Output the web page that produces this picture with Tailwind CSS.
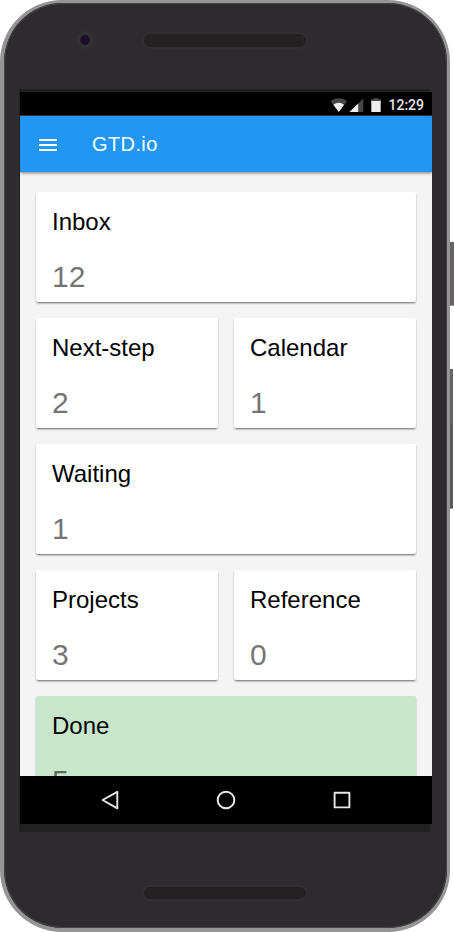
<!DOCTYPE html>
<html lang="en">
<head>
    <meta charset="UTF-8">
    <meta name="viewport" content="width=device-width, initial-scale=1.0">
    <title>GTD.io</title>
    <script src="https://cdn.jsdelivr.net/npm/@tailwindcss/browser@4"></script>
</head>
<body class="bg-white flex overflow-hidden font-['Liberation_Sans',sans-serif]">
    <!-- Phone body -->
    <div class="w-[450px] h-[932px] shrink-0 rounded-[62px] border-[3px] border-b-4 border-l-4 border-[#959595] bg-[#2d2b2d]">
        <div class="h-full rounded-[59px] border border-[#444644] flex flex-col">
            <!-- Camera and speaker -->
            <div class="h-[85px] shrink-0 flex items-start pt-[27px] pl-[71px]">
                <div class="size-[18px] rounded-full border-4 border-[#333233] bg-[#1a1128]"></div>
                <div class="w-[166px] h-[17px] mt-px ml-[48px] rounded-full border-2 border-[#312f31] bg-[#232122]"></div>
            </div>

            <!-- Screen -->
            <div class="ml-[14px] w-[411px] h-[743px] shrink-0 bg-[#222122] pl-px pt-[3px]">
                <div class="w-[412px] h-[732px] flex flex-col overflow-hidden bg-[#f4f4f4]">
                    <div class="h-6 shrink-0 bg-black border-b border-[#3a3430] flex items-center justify-end pt-[2px] pr-2">
                        <svg class="w-[34px] h-[16px] mr-[7px]" viewBox="0 0 34 16">
                            <path d="M0.5 4.2C5 .1 12.5.1 17 4.2L8.8 15z" fill="#464646"/>
                            <path d="M3.4 7.8c3-2.7 7.6-2.7 10.6 0L8.8 15z" fill="#eee"/>
                            <path d="M33.3 1.5V15H19.5z" fill="#464646"/>
                            <path d="M28.2 6.5V15H19.5z" fill="#eee"/>
                        </svg>
                        <svg class="w-[10px] h-[16px] mr-[7px]" viewBox="0 0 10 16">
                            <path d="M2.5 1h5v1H10v3H0V2h2.5z" fill="#464646"/>
                            <path d="M0.3 4h9.4v11H0.3z" fill="#eee"/>
                        </svg>
                        <span class="font-['Roboto',sans-serif] font-medium text-[14px] leading-none text-[#e6e6e6]">12:29</span>
                    </div>

                    <header class="relative h-14 shrink-0 bg-[#2196f3] shadow-[0_1px_3px_rgba(0,0,0,0.5)] flex items-center pl-4">
                        <svg class="size-6 mt-0.5" viewBox="0 0 24 24" fill="#fff">
                            <path d="M3 18h18v-2H3v2zm0-5h18v-2H3v2zm0-7v2h18V6H3z"/>
                        </svg>
                        <h1 class="ml-8 text-[20px] tracking-[0.02em] text-white">GTD.io</h1>
                    </header>

                    <main class="flex-1 min-h-0 overflow-hidden px-4 pt-5">
                        <div class="grid grid-cols-2 gap-4">
                            <div class="col-span-2 h-[110px] rounded-[2px] bg-white px-4 pt-[14px] shadow-[0_2px_2px_0_rgba(0,0,0,0.14),0_3px_1px_-2px_rgba(0,0,0,0.2),0_1px_2px_0_rgba(0,0,0,0.2)]">
                                <h2 class="text-[24px] leading-8 text-black">Inbox</h2>
                                <p class="mt-6 text-[30px] leading-[30px] text-black opacity-54">12</p>
                            </div>
                            <div class="h-[110px] rounded-[2px] bg-white px-4 pt-[14px] shadow-[0_2px_2px_0_rgba(0,0,0,0.14),0_3px_1px_-2px_rgba(0,0,0,0.2),0_1px_2px_0_rgba(0,0,0,0.2)]">
                                <h2 class="text-[24px] leading-8 text-black">Next-step</h2>
                                <p class="mt-6 text-[30px] leading-[30px] text-black opacity-54">2</p>
                            </div>
                            <div class="h-[110px] rounded-[2px] bg-white px-4 pt-[14px] shadow-[0_2px_2px_0_rgba(0,0,0,0.14),0_3px_1px_-2px_rgba(0,0,0,0.2),0_1px_2px_0_rgba(0,0,0,0.2)]">
                                <h2 class="text-[24px] leading-8 text-black">Calendar</h2>
                                <p class="mt-6 text-[30px] leading-[30px] text-black opacity-54">1</p>
                            </div>
                            <div class="col-span-2 h-[110px] rounded-[2px] bg-white px-4 pt-[14px] shadow-[0_2px_2px_0_rgba(0,0,0,0.14),0_3px_1px_-2px_rgba(0,0,0,0.2),0_1px_2px_0_rgba(0,0,0,0.2)]">
                                <h2 class="text-[24px] leading-8 text-black">Waiting</h2>
                                <p class="mt-6 text-[30px] leading-[30px] text-black opacity-54">1</p>
                            </div>
                            <div class="h-[110px] rounded-[2px] bg-white px-4 pt-[14px] shadow-[0_2px_2px_0_rgba(0,0,0,0.14),0_3px_1px_-2px_rgba(0,0,0,0.2),0_1px_2px_0_rgba(0,0,0,0.2)]">
                                <h2 class="text-[24px] leading-8 text-black">Projects</h2>
                                <p class="mt-6 text-[30px] leading-[30px] text-black opacity-54">3</p>
                            </div>
                            <div class="h-[110px] rounded-[2px] bg-white px-4 pt-[14px] shadow-[0_2px_2px_0_rgba(0,0,0,0.14),0_3px_1px_-2px_rgba(0,0,0,0.2),0_1px_2px_0_rgba(0,0,0,0.2)]">
                                <h2 class="text-[24px] leading-8 text-black">Reference</h2>
                                <p class="mt-6 text-[30px] leading-[30px] text-black opacity-54">0</p>
                            </div>
                            <div class="col-span-2 h-[110px] rounded-[2px] bg-[#c8e6c9] px-4 pt-[14px] shadow-[0_2px_2px_0_rgba(0,0,0,0.14),0_3px_1px_-2px_rgba(0,0,0,0.2),0_1px_2px_0_rgba(0,0,0,0.2)]">
                                <h2 class="text-[24px] leading-8 text-black">Done</h2>
                                <p class="mt-6 text-[30px] leading-[30px] text-black opacity-54">5</p>
                            </div>
                        </div>
                    </main>

                    <!-- Android navigation -->
                    <nav class="h-12 shrink-0 bg-black flex items-center justify-center gap-[92px]">
                        <svg class="size-6" viewBox="0 0 24 24" fill="none" stroke="#e8e8e8" stroke-width="1.9" stroke-linejoin="round">
                            <path d="M19.3 3.8v16.6L4.6 12z"/>
                        </svg>
                        <svg class="size-6" viewBox="0 0 24 24" fill="none" stroke="#e8e8e8" stroke-width="2">
                            <circle cx="12" cy="12" r="8.3"/>
                        </svg>
                        <svg class="size-6" viewBox="0 0 24 24" fill="none" stroke="#e8e8e8" stroke-width="1.9" stroke-linejoin="round">
                            <path d="M4.6 4.8h14.8v14.6H4.6z"/>
                        </svg>
                    </nav>
                </div>
            </div>

            <div class="flex justify-start pt-[53px] pl-[137px]">
                <div class="w-[166px] h-4 rounded-full border-2 border-[#312f31] bg-[#232122]"></div>
            </div>
        </div>
    </div>

    <!-- Side buttons -->
    <div class="pt-[242px] flex flex-col">
        <div class="w-1 h-[64px] bg-[#656364] border-b border-[#999]"></div>
        <div class="mt-[63px] w-[3px] h-[55px] bg-[#656364]"></div>
        <div class="w-[3px] h-[85px] bg-[#5c5a5b] border-b border-[#999]"></div>
    </div>
</body>
</html>
